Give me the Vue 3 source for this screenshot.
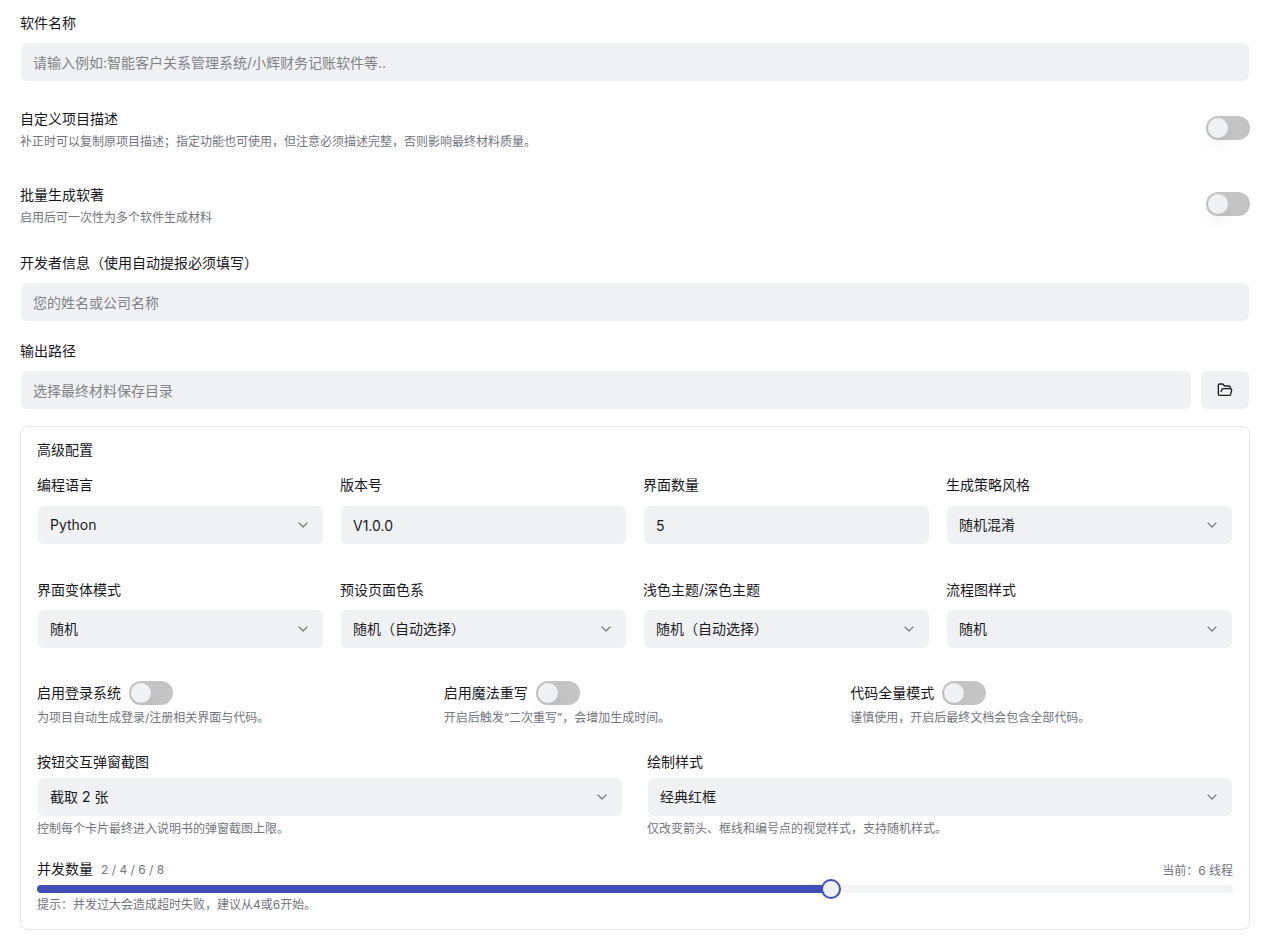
<script setup>
const row1 = [
  { label: '编程语言', value: 'Python', select: true },
  { label: '版本号', value: 'V1.0.0', select: false },
  { label: '界面数量', value: '5', select: false },
  { label: '生成策略风格', value: '随机混淆', select: true },
]
const row2 = [
  { label: '界面变体模式', value: '随机', select: true },
  { label: '预设页面色系', value: '随机（自动选择）', select: true },
  { label: '浅色主题/深色主题', value: '随机（自动选择）', select: true },
  { label: '流程图样式', value: '随机', select: true },
]
const toggles = [
  { label: '启用登录系统', hint: '为项目自动生成登录/注册相关界面与代码。' },
  { label: '启用魔法重写', hint: '开启后触发“二次重写”，会增加生成时间。' },
  { label: '代码全量模式', hint: '谨慎使用，开启后最终文档会包含全部代码。' },
]
const row3 = [
  { label: '按钮交互弹窗截图', value: '截取 2 张', hint: '控制每个卡片最终进入说明书的弹窗截图上限。' },
  { label: '绘制样式', value: '经典红框', hint: '仅改变箭头、框线和编号点的视觉样式，支持随机样式。' },
]
const percent = 66.4
</script>

<template>
  <main class="page">
    <label class="label first">软件名称</label>
    <div class="control"><input class="field" placeholder="请输入例如:智能客户关系管理系统/小辉财务记账软件等.." /></div>

    <section class="switch-row desc-row">
      <div>
        <div class="label">自定义项目描述</div>
        <div class="hint">补正时可以复制原项目描述；指定功能也可使用，但注意必须描述完整，否则影响最终材料质量。</div>
      </div>
      <span class="switch top"><i></i></span>
    </section>

    <section class="switch-row batch-row">
      <div>
        <div class="label">批量生成软著</div>
        <div class="hint">启用后可一次性为多个软件生成材料</div>
      </div>
      <span class="switch top"><i></i></span>
    </section>

    <label class="label dev">开发者信息（使用自动提报必须填写）</label>
    <div class="control"><input class="field" placeholder="您的姓名或公司名称" /></div>

    <label class="label out">输出路径</label>
    <div class="path-row">
      <div class="control grow"><input class="field" placeholder="选择最终材料保存目录" /></div>
      <button class="folder" type="button" aria-label="选择目录">
        <svg width="16" height="16" viewBox="0 0 24 24" fill="none" stroke="#1b1b1f" stroke-width="2" stroke-linecap="round" stroke-linejoin="round">
          <path d="m6 14 1.5-2.9A2 2 0 0 1 9.24 10H20a2 2 0 0 1 1.94 2.5l-1.54 6a2 2 0 0 1-1.95 1.5H4a2 2 0 0 1-2-2V5a2 2 0 0 1 2-2h3.9a2 2 0 0 1 1.69.9l.81 1.2a2 2 0 0 0 1.67.9H18a2 2 0 0 1 2 2v2" />
        </svg>
      </button>
    </div>

    <section class="card">
      <div class="label card-title">高级配置</div>

      <div class="grid four">
        <div v-for="item in row1" :key="item.label">
          <div class="label">{{ item.label }}</div>
          <div class="control box" :class="{ pick: item.select }">
            <span>{{ item.value }}</span>
            <svg v-if="item.select" width="16" height="16" viewBox="0 0 24 24" fill="none" stroke="#777b82" stroke-width="1.8" stroke-linecap="round" stroke-linejoin="round"><path d="m6 9 6 6 6-6" /></svg>
          </div>
        </div>
      </div>

      <div class="grid four second">
        <div v-for="item in row2" :key="item.label">
          <div class="label">{{ item.label }}</div>
          <div class="control box pick">
            <span>{{ item.value }}</span>
            <svg width="16" height="16" viewBox="0 0 24 24" fill="none" stroke="#777b82" stroke-width="1.8" stroke-linecap="round" stroke-linejoin="round"><path d="m6 9 6 6 6-6" /></svg>
          </div>
        </div>
      </div>

      <div class="grid three">
        <div v-for="item in toggles" :key="item.label">
          <div class="inline">
            <span class="label">{{ item.label }}</span>
            <span class="switch"><i></i></span>
          </div>
          <div class="hint tight">{{ item.hint }}</div>
        </div>
      </div>

      <div class="grid two">
        <div v-for="item in row3" :key="item.label">
          <div class="label">{{ item.label }}</div>
          <div class="control box pick">
            <span>{{ item.value }}</span>
            <svg width="16" height="16" viewBox="0 0 24 24" fill="none" stroke="#777b82" stroke-width="1.8" stroke-linecap="round" stroke-linejoin="round"><path d="m6 9 6 6 6-6" /></svg>
          </div>
          <div class="hint below">{{ item.hint }}</div>
        </div>
      </div>

      <div class="slider-head">
        <div>
          <span class="label">并发数量</span>
          <span class="steps">2 / 4 / 6 / 8</span>
        </div>
        <span class="current">当前：6 线程</span>
      </div>
      <div class="track">
        <div class="fill" :style="{ width: percent + '%' }"></div>
        <span class="thumb" :style="{ left: percent + '%' }"></span>
      </div>
      <div class="hint slider-hint">提示：并发过大会造成超时失败，建议从4或6开始。</div>
    </section>
  </main>
</template>

<style>
html, body { background: #fff; }
</style>

<style scoped>
.page {
  box-sizing: border-box;
  width: 1270px;
  height: 944px;
  overflow: hidden;
  padding: 14px 20px 0;
  font-family: Inter, "Noto Sans CJK SC", sans-serif;
  color: #1b1b1f;
  background: #fff;
}
.label {
  display: block;
  font-size: 14px;
  line-height: 18px;
  color: #18181b;
}
.hint {
  font-size: 12px;
  line-height: 16px;
  color: #71757c;
  margin-top: 6px;
}
.control {
  box-sizing: border-box;
  height: 38px;
  margin: 11px 1px 0;
  background: #f0f1f3;
  border-radius: 6px;
  display: flex;
  align-items: center;
}
.field {
  width: 100%;
  height: 100%;
  box-sizing: border-box;
  border: 0;
  outline: 0;
  background: transparent;
  padding: 0 12px;
  font: inherit;
  font-size: 14px;
  color: #1b1b1f;
}
.field::placeholder { color: #7f8389; opacity: 1; }
.switch-row {
  display: flex;
  justify-content: space-between;
  align-items: flex-start;
}
.desc-row { margin-top: 29px; height: 45px; }
.batch-row { margin-top: 31px; height: 45px; }
.switch {
  position: relative;
  display: inline-block;
  box-sizing: border-box;
  width: 44px;
  height: 24px;
  border-radius: 12px;
  background: #c4c4c4;
  flex: none;
}
.switch.top { margin-top: 6px; }
.switch i {
  position: absolute;
  left: 2px;
  top: 2px;
  width: 20px;
  height: 20px;
  border-radius: 50%;
  background: #f0f1f3;
  box-shadow: 0 8px 14px rgba(0, 0, 0, .05);
}
.dev { margin-top: 23px; }
.out { margin-top: 21px; }
.path-row { display: flex; gap: 10px; margin: 0; }
.grow { flex: 1; margin-right: 0; }
.folder {
  width: 48px;
  height: 38px;
  margin: 11px 1px 0 0;
  padding: 0;
  border: 0;
  border-radius: 6px;
  background: #f0f1f3;
  display: flex;
  align-items: center;
  justify-content: center;
}
.card {
  box-sizing: border-box;
  height: 504px;
  margin-top: 17px;
  padding: 14px 16px 0;
  border: 1px solid #e5e6e8;
  border-radius: 8px;
  background: #fff;
}
.card-title { margin-bottom: 17px; }
.grid { display: grid; }
.four { grid-template-columns: repeat(4, 1fr); gap: 16px; }
.four .control { margin-top: 12px; }
.box { padding: 0 12px; font-size: 14px; color: #1b1b1f; justify-content: space-between; }
.pick span { margin-bottom: 2px; }
.second { margin-top: 37px; }
.second .control { margin-top: 11px; }
.three { grid-template-columns: repeat(3, 1fr); gap: 24px; margin-top: 33px; }
.inline { display: flex; align-items: center; gap: 8px; }
.tight { margin-top: 5px; }
.two { grid-template-columns: repeat(2, 1fr); gap: 24px; margin-top: 27px; }
.two .control { margin-top: 7px; }
.below { margin-top: 5px; }
.slider-head {
  display: flex;
  justify-content: space-between;
  align-items: center;
  margin-top: 23px;
  height: 18px;
}
.slider-head > div { display: flex; align-items: center; gap: 8px; }
.steps, .current { font-size: 12px; color: #71757c; }
.track {
  position: relative;
  height: 8px;
  margin-top: 7px;
  border-radius: 4px;
  background: #f2f3f5;
}
.fill {
  height: 100%;
  border-radius: 4px;
  background: #3f4fb5;
}
.thumb {
  position: absolute;
  top: 50%;
  box-sizing: border-box;
  width: 20px;
  height: 20px;
  margin: -10px 0 0 -10px;
  border: 2px solid #3f4fb5;
  border-radius: 50%;
  background: #eef0f4;
}
.slider-hint { margin-top: 4px; }
</style>
